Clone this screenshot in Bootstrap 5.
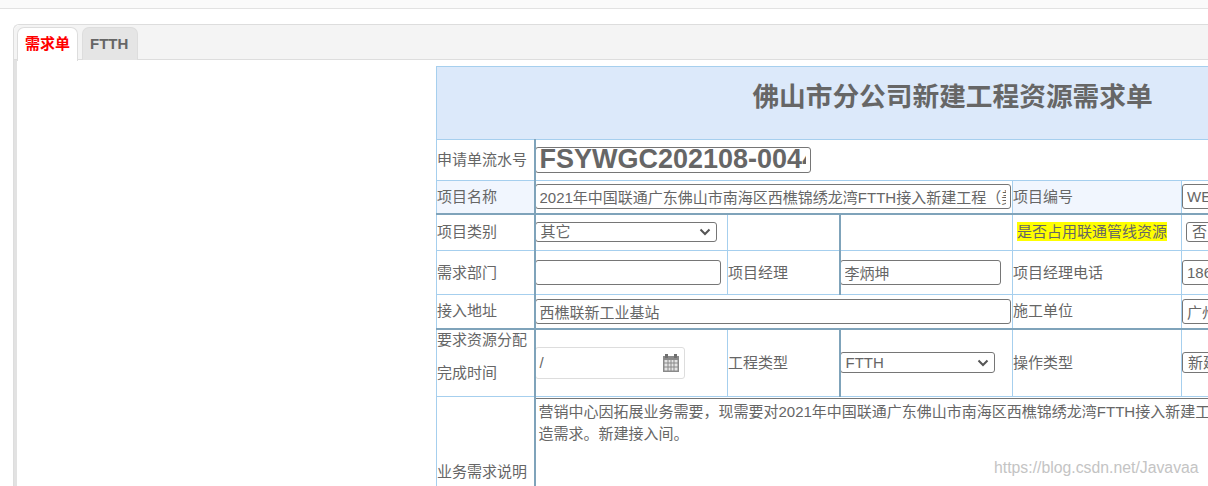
<!DOCTYPE html>
<html lang="zh">
<head>
<meta charset="utf-8">
<title>需求单</title>
<link href="https://cdn.jsdelivr.net/npm/bootstrap@5.3.0/dist/css/bootstrap.min.css" rel="stylesheet">
<style>
html,body{overflow:hidden;height:486px;}
body{background:#fff;color:#666;font:15px/20px "Liberation Sans","Noto Sans CJK SC",sans-serif;}
.topstrip{height:9px;background:#fafafa;border-bottom:1px solid #e2e2e2;}
.shell{width:1400px;margin:15px 0 0 13px;border:1px solid #ddd;border-radius:6px 0 0 0;border-right:0;}
.tabhead{background:#f4f4f4;height:35px;padding:2px 0 0 3px;border-bottom:1px solid #ddd;border-radius:6px 0 0 0;gap:4px;}
.tabhead .nav-link{height:33px;padding:6px 7px;font-weight:700;font-size:15px;line-height:20px;border:1px solid #ddd;border-bottom:0;border-radius:7px 7px 0 0;margin:0;}
.tabhead .tab-on{color:#f00;background:#fff;height:34px;width:61px;}
.tabhead .tab-off{color:#666;background:#e5e5e5;width:56px;}
.panebody{border-left:3px solid #e2e2e2;padding:6px 0 0 419px;height:430px;}
.reqtable{border-collapse:collapse;table-layout:fixed;width:1032px;}
.reqtable td{border:1px solid #a6cfee;padding:0;vertical-align:middle;color:#666;}
.reqtable .titlecell{height:73px;background:#dce9fa;text-align:center;font-size:26.7px;font-weight:700;line-height:30px;padding-bottom:12px;}
.reqtable .tinted{background:#f1f6fe;}
.reqtable .heavyt td{border-top:2px solid #7fa3ba;}
.reqtable .heavyl{border-left:2px solid #7fa3ba;}
.heavyl>.fieldbox,.heavyl>.datebox{margin-left:-1px;}
.fieldbox{display:block;height:25px;padding:0 4px;font-size:15px;line-height:23px;color:#666;border:1px solid #767676;border-radius:3px;background:#fff;font-family:inherit;box-shadow:none;}
.fieldbox:focus{outline:0;}
.snobox{width:276px;height:26px;font-size:27px;font-weight:700;line-height:24px;padding:0 4px;overflow:hidden;margin-top:-1px;}
.pickbox{appearance:none;padding:0 20px 0 5px;height:20px;line-height:18px;background:#fff url("data:image/svg+xml,%3Csvg xmlns='http://www.w3.org/2000/svg' width='12' height='8' viewBox='0 0 12 8'%3E%3Cpath d='M1.500 1.500 6 6l4.500-4.500' fill='none' stroke='%23555' stroke-width='2'/%3E%3C/svg%3E") no-repeat right 5px center;}
.kindpick{width:182px;}
.nopick{width:80px;margin-left:4px;}
.buildpick{width:155px;height:21px;line-height:19px;}
.actpick{width:120px;height:21px;line-height:19px;}
.datebox{width:150px;height:32px;border:1px solid #ddd;border-radius:3px;padding:0 4px;}
.notebox{height:146px;width:742px;border:1px solid #767676;border-radius:0;padding:2px 3px;line-height:22px;resize:none;display:block;margin-top:1px;}
.flagmark{display:inline-block;background:#ff0;margin-left:4px;line-height:19px;height:19px;}
.twolines{line-height:33px;}
.liftup{margin-top:-13px;}
.sitemark{position:absolute;left:994px;top:458px;color:#c4c4c4;font-size:15.800px;line-height:20px;}
</style>
</head>
<body>
<div class="topstrip"></div>
<div class="shell">
  <ul class="nav tabhead">
    <li class="nav-item"><a class="nav-link tab-on" href="#">需求单</a></li>
    <li class="nav-item"><a class="nav-link tab-off" href="#">FTTH</a></li>
  </ul>
  <div class="panebody">
    <table class="reqtable">
      <colgroup><col style="width:98px"><col style="width:193px"><col style="width:112px"><col style="width:173px"><col style="width:169px"><col style="width:287px"></colgroup>
      <tr><td class="titlecell" colspan="6">佛山市分公司新建工程资源需求单</td></tr>
      <tr style="height:41px">
        <td>申请单流水号</td>
        <td class="heavyl" colspan="5"><input class="fieldbox snobox" value="FSYWGC202108-0044" readonly></td>
      </tr>
      <tr style="height:33px">
        <td class="tinted">项目名称</td>
        <td class="heavyl" colspan="3"><input class="fieldbox w-100" value="2021年中国联通广东佛山市南海区西樵锦绣龙湾FTTH接入新建工程（美的）" readonly></td>
        <td class="tinted">项目编号</td>
        <td><input class="fieldbox w-100" value="WEB2021" readonly></td>
      </tr>
      <tr class="heavyt" style="height:37px">
        <td>项目类别</td>
        <td class="heavyl"><select class="fieldbox pickbox kindpick"><option>其它</option></select></td>
        <td></td>
        <td class="heavyl"></td>
        <td><span class="flagmark">是否占用联通管线资源</span></td>
        <td><select class="fieldbox pickbox nopick"><option>否</option></select></td>
      </tr>
      <tr style="height:44px">
        <td>需求部门</td>
        <td class="heavyl"><input class="fieldbox" style="width:186px" readonly></td>
        <td>项目经理</td>
        <td class="heavyl"><input class="fieldbox" style="width:161px" value="李炳坤" readonly></td>
        <td>项目经理电话</td>
        <td><input class="fieldbox w-100" value="18620000000" readonly></td>
      </tr>
      <tr style="height:34px">
        <td>接入地址</td>
        <td class="heavyl" colspan="3"><input class="fieldbox w-100" value="西樵联新工业基站" readonly></td>
        <td>施工单位</td>
        <td><input class="fieldbox w-100" value="广州市" readonly></td>
      </tr>
      <tr class="heavyt" style="height:68px">
        <td class="twolines"><div class="liftup">要求资源分配<br>完成时间</div></td>
        <td class="heavyl">
          <div class="datebox d-flex align-items-center justify-content-between">
            <span>/</span>
            <svg width="18" height="20" viewBox="0 0 18 20" aria-hidden="true"><path fill="#8a8a8a" d="M1 3h16v16H1z"/><path fill="#6f6f6f" d="M3 1h3v4H3zM12 1h3v4h-3z"/><path fill="#e4e4e4" d="M2.500 7h3v2.500h-3zM6.500 7h2v2.500h-2zM9.500 7h2v2.500h-2zM12.500 7h3v2.500h-3zM2.500 10.500h3v3h-3zM6.500 10.500h2v3h-2zM9.500 10.500h2v3h-2zM12.500 10.500h3v3h-3zM2.500 14.500h3v3h-3zM6.500 14.500h2v3h-2zM9.500 14.500h2v3h-2zM12.500 14.500h3v3h-3z"/></svg>
          </div>
        </td>
        <td>工程类型</td>
        <td class="heavyl"><select class="fieldbox pickbox buildpick"><option>FTTH</option></select></td>
        <td>操作类型</td>
        <td><select class="fieldbox pickbox actpick"><option>新建</option></select></td>
      </tr>
      <tr style="height:150px">
        <td>业务需求说明</td>
        <td class="heavyl" colspan="5" style="vertical-align:top"><textarea class="fieldbox notebox" readonly>营销中心因拓展业务需要，现需要对2021年中国联通广东佛山市南海区西樵锦绣龙湾FTTH接入新建工程进行改造需求。新建接入间。</textarea></td>
      </tr>
    </table>
  </div>
</div>
<div class="sitemark">https://blog.csdn.net/Javavaa</div>
<script src="https://cdn.jsdelivr.net/npm/bootstrap@5.3.0/dist/js/bootstrap.bundle.min.js"></script>
</body>
</html>
